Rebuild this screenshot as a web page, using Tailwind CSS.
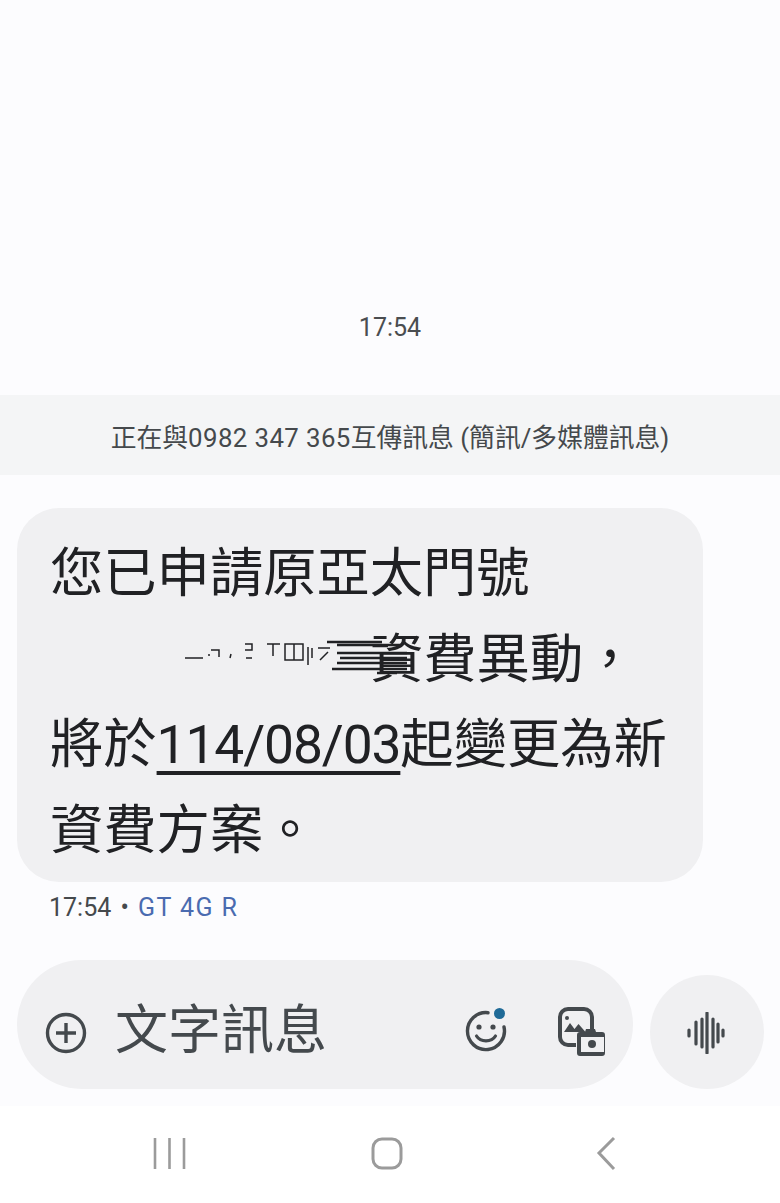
<!doctype html>
<html lang="zh-Hant"><head><meta charset="utf-8"><script src="https://cdn.jsdelivr.net/npm/@tailwindcss/browser@4"></script></head>
<body class="m-0 bg-white">
<div class="w-[780px] h-[1203px] overflow-hidden flex flex-col bg-[#fcfcfe] font-['Roboto','Noto_Sans_CJK_TC',sans-serif]">
  <div class="h-[395px] shrink-0 flex flex-col justify-end items-center pb-[52px]">
    <div class="text-[25px] leading-[30px] text-[#4a4d50]">17:54</div>
  </div>
  <div class="h-[80px] shrink-0 bg-[#f4f5f6] flex items-center justify-center pt-[6px] text-[25.8px] text-[#45494c] whitespace-nowrap"><span>正在與<span class="tracking-[0.4px]">0982 347 365</span>互傳訊息 (簡訊/多媒體訊息)</span></div>
  <div class="pt-[33px] pl-[17px] shrink-0">
    <div class="relative w-[686px] h-[374px] rounded-[42px] bg-[#f0f0f2] pl-[33px] pt-[24px] text-[#202124] text-[53.3px] leading-[85.5px] whitespace-nowrap overflow-hidden">
      <div>您已申請原亞太門號</div>
      <div class="pl-[320px]">資費異動，</div>
      <div>將於<span class="underline decoration-[4px] underline-offset-[8px] tracking-[-1.1px]">114/08/03</span>起變更為新</div>
      <div>資費方案。</div>
      <svg class="absolute left-[165px] top-[130px]" width="240" height="45" viewBox="0 0 240 45" fill="none" stroke="#202124" stroke-width="1.500">
        <path d="M3 20H21M26 17h2M29 12h8v7M48 20l1-4M63 6h7v6h-7M64 20h6M85 6h13M91 6v12M103 6h18v16h-18zM112 6v16M126 9v18M130 10v10M136 10h12M138 22l8-8"/>
        <path stroke-width="2.600" d="M145 4h55M155 7h65M155 15h70M158 20h67M155 25h70M150 31h75M195 35h20"/>
      </svg>
    </div>
  </div>
  <div class="pl-[49px] pt-[11px] h-[78px] shrink-0 text-[25px] leading-[30px] whitespace-nowrap text-[#45494c]">17:54 <span class="mx-[3px]">•</span> <span class="text-[#4a6bb0] tracking-[1.4px]">GT 4G R</span></div>
  <div class="flex items-end pl-[17px] gap-[17px] shrink-0">
    <div class="w-[616px] h-[129px] rounded-[65px] bg-[#f0f0f2] flex items-center pl-[28px] pr-[26px] text-[#44494d]">
      <svg width="42" height="42" viewBox="0 0 42 42" fill="none" stroke="#44494d" stroke-width="3.400" class="mt-[16px] shrink-0"><circle cx="21" cy="21" r="18.500"/><path d="M21 11v20M11 21h20"/></svg>
      <span class="ml-[28px] text-[53px] leading-none whitespace-nowrap shrink-0 mt-[14px]">文字訊息</span>
      <svg width="44" height="48" viewBox="0 0 44 48" fill="none" class="ml-[137px] mt-[12px] shrink-0"><path d="M24 5.700A18.500 18.500 0 1 0 40 20" stroke="#44494d" stroke-width="3.400" stroke-linecap="round"/><circle cx="15" cy="20" r="2.600" fill="#44494d"/><circle cx="29" cy="20" r="2.600" fill="#44494d"/><path d="M12.500 29c4 6.500 15 6.500 19 0" stroke="#44494d" stroke-width="3.200" stroke-linecap="round"/><circle cx="35.500" cy="6.500" r="5.500" fill="#1f6a97"/></svg>
      <svg width="50" height="52" viewBox="0 0 50 52" fill="none" class="ml-[49px] mt-[17px] shrink-0"><path d="M19 38H11a8 8 0 0 1-8-8V10a8 8 0 0 1 8-8h16a8 8 0 0 1 8 8v12" stroke="#44494d" stroke-width="4"/><circle cx="10" cy="11" r="2" fill="#44494d"/><path d="M7 25l6-9 4.500 6 4-5 7 8z" fill="#44494d"/><path d="M20 28a3 3 0 0 1 3-3h5l1-3h9l1 3h6a3 3 0 0 1 3 3v18a3 3 0 0 1-3 3H23a3 3 0 0 1-3-3z" fill="#44494d"/><rect x="24" y="30" width="23" height="15" fill="#f0f0f2"/><circle cx="35" cy="37" r="4" fill="#44494d"/></svg>
    </div>
    <div class="w-[114px] h-[114px] rounded-full bg-[#f0f0f2] flex items-center justify-center shrink-0">
      <svg width="38" height="42" viewBox="0 0 38 42" stroke="#44494d" stroke-linecap="round" stroke-width="3.200" class="-ml-[2px] mt-[2px]"><path d="M2 18v6M9 10v22M15 7v28M20 1v40M26 7v28M31 12v18M36 18v6"/></svg>
    </div>
  </div>
  <div class="flex-1 bg-white mt-[17px] relative">
    <svg class="absolute left-[150px] top-[30px]" width="40" height="36" viewBox="0 0 40 36" stroke="#9b9b9b" stroke-width="2.600"><path d="M5 2v31M19.500 2v31M34 2v31"/></svg>
    <svg class="absolute left-[370px] top-[30px]" width="34" height="36" viewBox="0 0 34 36" fill="none" stroke="#9b9b9b" stroke-width="3"><rect x="3" y="3" width="28" height="29" rx="9"/></svg>
    <svg class="absolute left-[594px] top-[29px]" width="24" height="36" viewBox="0 0 24 36" fill="none" stroke="#9b9b9b" stroke-width="3"><path d="M20 3L5 18l15 16"/></svg>
  </div>
</div>
</body></html>
